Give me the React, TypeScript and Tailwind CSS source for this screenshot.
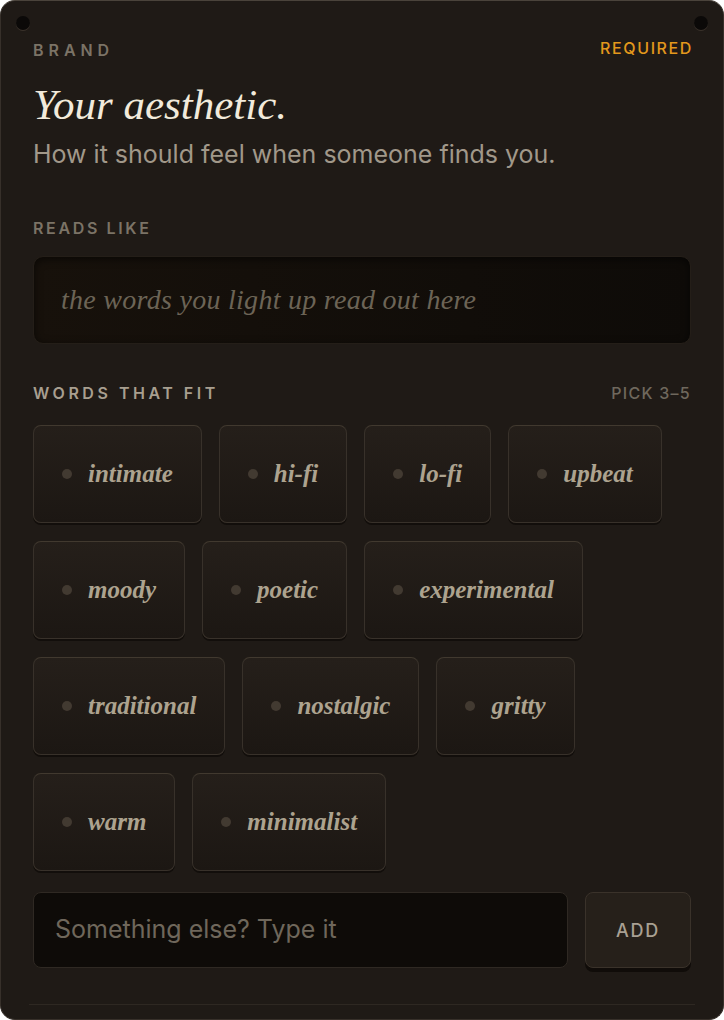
import React from "react";

const serif = { fontFamily: '"Liberation Serif", "DejaVu Serif", serif' } as const;
const sans = { fontFamily: 'Inter, "Liberation Sans", sans-serif' } as const;

const rows: string[][] = [
  ["intimate", "hi-fi", "lo-fi", "upbeat"],
  ["moody", "poetic", "experimental"],
  ["traditional", "nostalgic", "gritty"],
  ["warm", "minimalist"],
];

function Chip({ label }: { label: string }) {
  return (
    <button className="h-[98px] px-[28px] flex items-center gap-[16px] rounded-[8px] border border-[#38312a] border-t-[#41392f] bg-gradient-to-b from-[#251f1a] to-[#1c1713] shadow-[0_2px_0_#120e0b]">
      <span className="w-[10px] h-[10px] rounded-full bg-[#423a31]" />
      <span className="text-[25px] italic font-bold text-[#ada38f]" style={serif}>
        {label}
      </span>
    </button>
  );
}

export default function App() {
  return (
    <div className="w-[724px] h-[1020px] bg-white">
      <div
        className="relative w-full h-[1020px] rounded-[15px] bg-[#1f1a16] border border-[#37302a] border-t-[#4a433b] px-[32px] pt-[38px] overflow-hidden"
        style={sans}
      >
        <span className="absolute left-[15px] top-[15px] w-[14px] h-[14px] rounded-full bg-[#0b0908] shadow-[0_1px_0_#3a322b]" />
        <span className="absolute right-[15px] top-[15px] w-[14px] h-[14px] rounded-full bg-[#0b0908] shadow-[0_1px_0_#3a322b]" />

        <div className="flex justify-between items-center h-[22px]">
          <span className="text-[16px] font-semibold tracking-[0.31em] text-[#7b7366]">BRAND</span>
          <span className="text-[16px] font-medium tracking-[0.1em] text-[#e3981c] -mt-[5px] -mr-[2px]">REQUIRED</span>
        </div>

        <h1 className="mt-[20px] text-[43px] leading-[48px] italic text-[#f2eadb]" style={serif}>
          Your aesthetic.
        </h1>
        <p className="mt-[9px] text-[25px] leading-[32px] text-[#a1988a]">
          How it should feel when someone finds you.
        </p>

        <div className="mt-[48px] text-[16px] font-semibold tracking-[0.165em] text-[#7b7366] leading-[20px]">
          READS LIKE
        </div>
        <div className="mt-[18px] h-[88px] rounded-[10px] border border-[#241e18] bg-gradient-to-r from-[#17110b] to-[#0e0b08] shadow-[inset_0_2px_8px_rgba(0,0,0,0.6)] flex items-center px-[27px]">
          <span className="text-[28px] tracking-[0.01em] italic text-[#6c6456]" style={serif}>
            the words you light up read out here
          </span>
        </div>

        <div className="mt-[39px] flex justify-between items-center leading-[20px]">
          <span className="text-[16px] font-semibold tracking-[0.22em] text-[#a89f90]">WORDS THAT FIT</span>
          <span className="text-[16px] font-medium tracking-[0.08em] text-[#6f685d]">PICK 3–5</span>
        </div>

        <div className="mt-[22px] flex flex-col gap-[18px]">
          {rows.map((row, i) => (
            <div key={i} className="flex gap-[17px]">
              {row.map((w) => (
                <Chip key={w} label={w} />
              ))}
            </div>
          ))}
        </div>

        <div className="mt-[21px] flex gap-[17px]">
          <div className="flex-1 h-[76px] rounded-[8px] border border-[#2f2923] bg-[#0e0b08] flex items-center px-[21px]">
            <span className="text-[25px] text-[#6f675b]">Something else? Type it</span>
          </div>
          <button className="w-[106px] h-[76px] rounded-[8px] border border-[#3a322a] bg-[#26201a] shadow-[0_4px_0_#100c09] text-[18px] font-medium tracking-[0.1em] text-[#a9a093]">
            ADD
          </button>
        </div>

        <div className="mt-[36px] -mx-[4px] border-t border-[#2e2822]" />
      </div>
    </div>
  );
}
